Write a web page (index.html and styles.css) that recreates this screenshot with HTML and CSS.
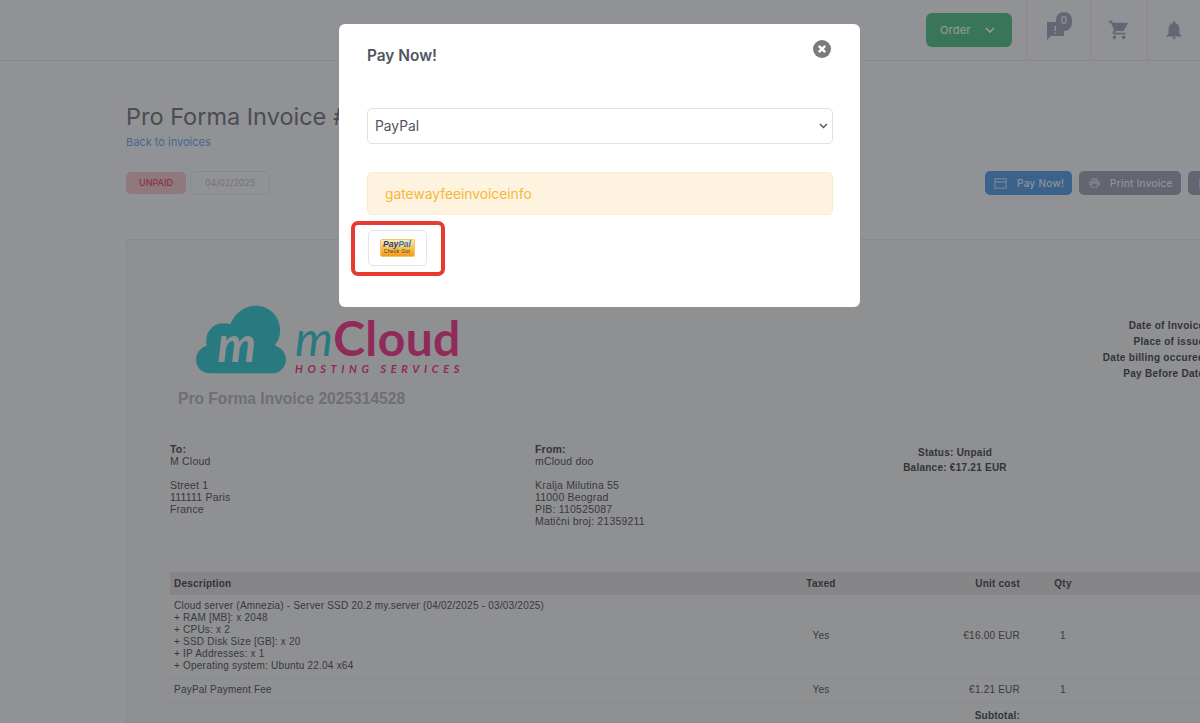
FILE: index.html
```html
<!DOCTYPE html>
<html lang="en">
<head>
    <meta charset="UTF-8">
    <title>Pro Forma Invoice</title>
    <link rel="stylesheet" href="styles.css">
</head>
<body>
    <div class="page">
        <header class="topbar">
            <a class="btn-order">Order
                <svg width="12" height="8" viewBox="0 0 12 8"><path d="M2 2l4 4 4-4" fill="none" stroke="currentColor" stroke-width="1.600"/></svg>
            </a>
            <div class="top-item top-item-first">
                <svg width="20" height="20" viewBox="0 0 20 20"><path d="M1 1h17v14H5l-4 4z" fill="#a7acc0"/><rect x="8.500" y="5" width="1.600" height="5" fill="#eef0f6"/><rect x="8.500" y="11.500" width="1.600" height="1.600" fill="#eef0f6"/></svg>
                <span class="top-badge">0</span>
            </div>
            <div class="top-item">
                <svg width="22" height="22" viewBox="0 0 24 24"><path fill="#a7acc0" d="M7 18a2 2 0 1 0 0 4 2 2 0 0 0 0-4zm10 0a2 2 0 1 0 0 4 2 2 0 0 0 0-4zM1 2v2h2l3.600 7.600L5.200 14c-.7 1.300.3 3 1.800 3h12v-2H7.400l1.100-2h7.500c.7 0 1.400-.4 1.700-1l3.600-6.500A1 1 0 0 0 21 4H5.200l-.9-2z"/></svg>
            </div>
            <div class="top-item">
                <svg width="22" height="22" viewBox="0 0 24 24"><path fill="#a7acc0" d="M12 22a2 2 0 0 0 2-2h-4a2 2 0 0 0 2 2zm6-6v-5c0-3.100-1.600-5.600-4.500-6.300V4a1.500 1.500 0 0 0-3 0v.7C7.600 5.400 6 7.900 6 11v5l-2 2v1h16v-1z"/></svg>
            </div>
        </header>

        <main class="content">
            <h1 class="page-title">Pro Forma Invoice #2025314528</h1>
            <a class="back-link">Back to invoices</a>

            <div class="status-row">
                <div class="status-left">
                    <span class="label-unpaid">UNPAID</span>
                    <span class="label-date">04/02/2025</span>
                </div>
                <div class="actions">
                    <a class="btn btn-blue">
                        <svg width="13" height="11" viewBox="0 0 13 11"><path d="M.8.8h11.400v9.400H.8z" fill="none" stroke="currentColor" stroke-width="1.500"/><rect x="1" y="3" width="11" height="1.800" fill="currentColor"/></svg>
                        <span>Pay Now!</span>
                    </a>
                    <a class="btn btn-grey">
                        <svg width="13" height="12" viewBox="0 0 24 22"><path fill="currentColor" d="M19 7H5a3 3 0 0 0-3 3v6h4v4h12v-4h4v-6a3 3 0 0 0-3-3zm-3 11H8v-5h8zM18 2H6v4h12z"/></svg>
                        <span>Print Invoice</span>
                    </a>
                    <a class="btn btn-grey">
                        <svg width="13" height="12" viewBox="0 0 24 22"><path fill="currentColor" d="M4 2h16v18H4z"/></svg>
                    </a>
                </div>
            </div>

            <section class="invoice">
                <div class="invoice-head">
                    <div class="brand">
                        <svg class="logo-cloud" width="90" height="70" viewBox="0 0 92 70">
                            <path fill="#43cbd5" d="M14 69C5 69 0 62 0 55c0-7 5-12 11-14C8 28 17 18 28 18c3 0 5 .5 7 1C40 7 50 0 61 0c14 0 25 11 25 25 0 5-1 9-4 13-2 2-1 3 1 4 5 2 9 7 9 13 0 7-6 14-13 14z"/>
                            <text class="logo-m" x="22" y="58">m</text>
                        </svg>
                        <div class="logo-words">
                            <div class="logo-name"><span class="logo-name-m">m</span>Cloud</div>
                            <div class="logo-sub">HOSTING SERVICES</div>
                        </div>
                    </div>
                    <dl class="dates">
                        <dt>Date of Invoice:</dt>
                        <dt>Place of issue:</dt>
                        <dt>Date billing occured:</dt>
                        <dt>Pay Before Date:</dt>
                    </dl>
                </div>
                <h2 class="invoice-title">Pro Forma Invoice 2025314528</h2>

                <div class="parties">
                    <div class="party party-to">
                        <b>To:</b><br>M Cloud<br><br>Street 1<br>111111 Paris<br>France
                    </div>
                    <div class="party party-from">
                        <b>From:</b><br>mCloud doo<br><br>Kralja Milutina 55<br>11000 Beograd<br>PIB: 110525087<br>Matični broj: 21359211
                    </div>
                    <div class="party party-status">
                        <b>Status: Unpaid</b><br><b>Balance: €17.21 EUR</b>
                    </div>
                </div>

                <table class="items">
                    <thead>
                        <tr>
                            <th class="col-desc">Description</th>
                            <th class="col-tax">Taxed</th>
                            <th class="col-cost">Unit cost</th>
                            <th class="col-qty">Qty</th>
                            <th class="col-rest"></th>
                        </tr>
                    </thead>
                    <tbody>
                        <tr>
                            <td class="col-desc">Cloud server (Amnezia) - Server SSD 20.2 my.server (04/02/2025 - 03/03/2025)<br>+ RAM [MB]: x 2048<br>+ CPUs: x 2<br>+ SSD Disk Size [GB]: x 20<br>+ IP Addresses: x 1<br>+ Operating system: Ubuntu 22.04 x64</td>
                            <td class="col-tax">Yes</td>
                            <td class="col-cost">€16.00 EUR</td>
                            <td class="col-qty">1</td>
                            <td class="col-rest"></td>
                        </tr>
                        <tr>
                            <td class="col-desc">PayPal Payment Fee</td>
                            <td class="col-tax">Yes</td>
                            <td class="col-cost">€1.21 EUR</td>
                            <td class="col-qty">1</td>
                            <td class="col-rest"></td>
                        </tr>
                        <tr class="row-sub">
                            <td class="col-desc"></td>
                            <td class="col-tax"></td>
                            <td class="col-cost"><b>Subtotal:</b></td>
                            <td class="col-qty"></td>
                            <td class="col-rest"></td>
                        </tr>
                    </tbody>
                </table>
            </section>
        </main>
    </div>

    <div class="overlay"></div>

    <div class="modal">
        <div class="modal-head">
            <h3 class="modal-title">Pay Now!</h3>
            <button class="modal-close" aria-label="Close">
                <svg width="18" height="18" viewBox="0 0 18 18"><circle cx="9" cy="9" r="9" fill="#7b7b7e"/><path d="M5.800 5.800l6.400 6.400m0-6.400l-6.400 6.400" stroke="#fff" stroke-width="2.400"/></svg>
            </button>
        </div>
        <div class="select-wrap">
            <select class="gateway-select">
                <option>PayPal</option>
            </select>
            <svg class="select-arrow" width="9" height="6" viewBox="0 0 9 6"><path d="M1 1l3.500 3.500L8 1" fill="none" stroke="#4a4f58" stroke-width="1.300"/></svg>
        </div>
        <div class="alert-fee">gatewayfeeinvoiceinfo</div>
        <div class="paypal-wrap">
            <div class="paypal-btn">
                <div class="paypal-badge">
                    <span class="paypal-word"><span class="paypal-pay">Pay</span><span class="paypal-pal">Pal</span></span>
                    <span class="paypal-check">Check Out</span>
                </div>
            </div>
        </div>
    </div>
</body>
</html>
```

FILE: styles.css
```css
html, body {
    margin: 0;
    height: 100%;
    overflow: hidden;
}
body {
    font-family: 'Inter', 'Roboto', sans-serif;
    background: #f2f3f9;
    color: #7d808a;
}
.page {
    width: 1400px;
}

/* top bar */
.topbar {
    height: 61px;
    width: 1200px;
    box-sizing: border-box;
    display: flex;
    justify-content: flex-end;
    align-items: stretch;
    border-bottom: 1px solid #e4e5ea;
}
.btn-order {
    align-self: center;
    margin: 0 14px 0 0;
    width: 86px;
    height: 34px;
    box-sizing: border-box;
    padding-left: 14px;
    display: flex;
    align-items: center;
    gap: 13px;
    background: #60c494;
    color: #fff;
    border-radius: 6px;
    font-size: 11px;
    letter-spacing: .2px;
}
.top-item {
    position: relative;
    width: 57px;
    box-sizing: border-box;
    display: flex;
    align-items: center;
    justify-content: center;
    border-left: 1px solid #e4e5ea;
}
.top-item:last-child {
    width: 53px;
}
.top-item-first {
    width: 64px;
}
.top-item-first svg {
    margin-right: 6px;
    margin-top: 2px;
}
.top-badge {
    position: absolute;
    top: 12px;
    left: 29px;
    width: 16px;
    height: 19px;
    border-radius: 8px;
    background: #a7acc0;
    color: #fff;
    font-size: 10px;
    line-height: 17px;
    text-align: center;
}

/* page content */
.content {
    padding: 41px 0 0 126px;
}
.page-title {
    margin: 0;
    font-size: 23.500px;
    line-height: 30px;
    font-weight: 400;
    color: #7d808a;
    white-space: nowrap;
}
.back-link {
    display: block;
    margin-top: 2px;
    font-size: 11px;
    line-height: 16px;
    color: #74aef0;
}
.status-row {
    margin-top: 21px;
    display: flex;
    align-items: center;
}
.status-left {
    display: flex;
    align-items: center;
    gap: 4px;
}
.label-unpaid {
    width: 60px;
    height: 22px;
    border-radius: 5px;
    background: #eec9d3;
    color: #e85472;
    font-size: 9px;
    font-weight: 500;
    line-height: 22px;
    text-align: center;
}
.label-date {
    width: 80px;
    height: 24px;
    box-sizing: border-box;
    border: 1px solid #e3e4e9;
    border-radius: 5px;
    color: #bfc2cc;
    font-size: 8.800px;
    line-height: 22px;
    text-align: center;
}
.actions {
    display: flex;
    gap: 7px;
    margin-left: 715px;
    flex: none;
}
.btn {
    height: 24px;
    box-sizing: border-box;
    padding: 0 8px 0 9px;
    display: flex;
    align-items: center;
    gap: 9px;
    border-radius: 5px;
    color: #fff;
    font-size: 10px;
    letter-spacing: .3px;
    white-space: nowrap;
}
.btn svg {
    opacity: .5;
}
.btn-blue {
    background: #62a3e8;
    gap: 10px;
}
.btn-grey {
    background: #a6a9bc;
}

/* invoice */
.invoice {
    margin-top: 44px;
    width: 1200px;
    height: 600px;
    box-sizing: border-box;
    background: #eff0f4;
    border: 1px solid #e3e4e9;
    border-radius: 4px;
    padding: 64px 0 0 43px;
    font-family: 'Liberation Sans', Arial, sans-serif;
    font-size: 10px;
    line-height: 12px;
    color: #5f6168;
}
.invoice b {
    color: #55575e;
}
.invoice-head {
    display: flex;
    width: 1100px;
}
.brand {
    margin-left: 26px;
    display: flex;
    gap: 9px;
    width: 888px;
    flex: none;
}
.logo-cloud {
    margin-top: 1px;
}
.logo-m {
    font-family: 'Lato', sans-serif;
    font-style: italic;
    font-weight: 700;
    font-size: 50px;
    fill: #eff0f4;
}
.logo-words {
    padding-top: 14px;
}
.logo-name {
    font-family: 'Lato', sans-serif;
    font-size: 48px;
    line-height: 40px;
    font-weight: 700;
    color: #f04696;
    letter-spacing: .4px;
}
.logo-name-m {
    color: #43cbd5;
    font-style: italic;
    font-weight: 400;
}
.logo-sub {
    margin-top: 5px;
    font-family: 'Lato', sans-serif;
    font-style: italic;
    font-size: 11px;
    line-height: 12px;
    font-weight: 700;
    letter-spacing: 4.600px;
    color: #f04696;
    white-space: nowrap;
}
.dates {
    margin: 14px 0 0;
    flex: none;
    width: 124px;
    text-align: right;
    font-size: 10px;
    line-height: 16px;
    font-weight: 700;
    letter-spacing: .3px;
    white-space: nowrap;
    color: #55575e;
}
.invoice-title {
    margin: 7px 0 0 8px;
    font-size: 15.600px;
    line-height: 20px;
    font-weight: 700;
    color: #b8bac0;
}
.parties {
    margin-top: 34px;
    display: flex;
    font-size: 10.500px;
    line-height: 12px;
    letter-spacing: .2px;
}
.party-to,
.party-from {
    width: 365px;
    flex: none;
}
.party-status {
    margin-top: 2px;
    text-align: center;
    width: 110px;
    flex: none;
    line-height: 15px;
    font-size: 10px;
    letter-spacing: .25px;
    white-space: nowrap;
}
.items {
    margin-top: 45px;
    width: 1100px;
    border-collapse: collapse;
    table-layout: fixed;
    font-size: 10px;
    line-height: 12px;
    letter-spacing: .22px;
}
.items th {
    height: 23px;
    padding: 0 4px;
    background: #dfe0e5;
    font-weight: 700;
    color: #55575e;
}
.items td {
    padding: 5px 4px 6px;
    border-bottom: 1px solid #e3e4e9;
}
.col-desc {
    text-align: left;
    width: 617px;
}
.col-tax {
    text-align: center;
    width: 44px;
}
.col-cost {
    text-align: right;
    width: 169px;
}
.col-qty {
    text-align: center;
    width: 70px;
}
.items .row-sub td {
    padding-top: 7px;
    border-bottom: 0;
}

/* overlay + modal */
.overlay {
    position: fixed;
    inset: 0;
    background: rgba(0, 0, 0, .4);
}
.modal {
    position: fixed;
    top: 24px;
    left: 339px;
    width: 521px;
    height: 283px;
    box-sizing: border-box;
    padding: 21px 27px 0 28px;
    background: #fff;
    border-radius: 6px;
}
.modal-head {
    display: flex;
    justify-content: space-between;
    align-items: flex-start;
    height: 63px;
}
.modal-title {
    margin: 0;
    font-size: 15.400px;
    line-height: 22px;
    font-weight: 600;
    color: #50555e;
}
.modal-close {
    margin: -5px 2px 0 0;
    padding: 0;
    width: 18px;
    height: 18px;
    border: 0;
    background: none;
}
.select-wrap {
    position: relative;
    width: 466px;
}
.gateway-select {
    display: block;
    width: 466px;
    height: 36px;
    padding: 0 7px;
    border: 1px solid #dfe1e6;
    border-radius: 5px;
    background: #fff;
    font-family: 'Inter', sans-serif;
    font-size: 13.800px;
    color: #50555e;
    appearance: none;
}
.select-arrow {
    position: absolute;
    right: 5px;
    top: 15px;
    pointer-events: none;
}
.alert-fee {
    margin-top: 28px;
    width: 466px;
    height: 43px;
    box-sizing: border-box;
    padding: 1px 17px 0;
    border: 1px solid #fdeccb;
    border-radius: 5px;
    background: #fef3de;
    color: #f5b83d;
    font-size: 13.800px;
    line-height: 41px;
}
.paypal-wrap {
    margin: 6px 0 0 -16px;
    width: 94px;
    height: 55px;
    box-sizing: border-box;
    border: 4px solid #e73b32;
    border-radius: 7px;
    padding: 0 2px 1px 0;
    display: flex;
    align-items: center;
    justify-content: center;
}
.paypal-btn {
    width: 59px;
    height: 36px;
    box-sizing: border-box;
    border: 1px solid #e1e3e8;
    border-radius: 5px;
    display: flex;
    align-items: center;
    justify-content: center;
}
.paypal-badge {
    width: 35px;
    height: 18px;
    box-sizing: border-box;
    border: 1px solid #f5c36a;
    border-radius: 2px;
    background: linear-gradient(180deg, #fde9b8 0, #fbc65a 45%, #f59a1c 100%);
    display: flex;
    flex-direction: column;
    align-items: center;
    font-family: 'Liberation Sans', Arial, sans-serif;
}
.paypal-word {
    font-size: 8.500px;
    line-height: 8px;
    font-weight: 700;
    font-style: italic;
}
.paypal-pay {
    color: #1d3f86;
}
.paypal-pal {
    color: #2f78c0;
}
.paypal-check {
    font-size: 5px;
    line-height: 7px;
    letter-spacing: .3px;
    color: #3b3320;
    white-space: nowrap;
}
```
